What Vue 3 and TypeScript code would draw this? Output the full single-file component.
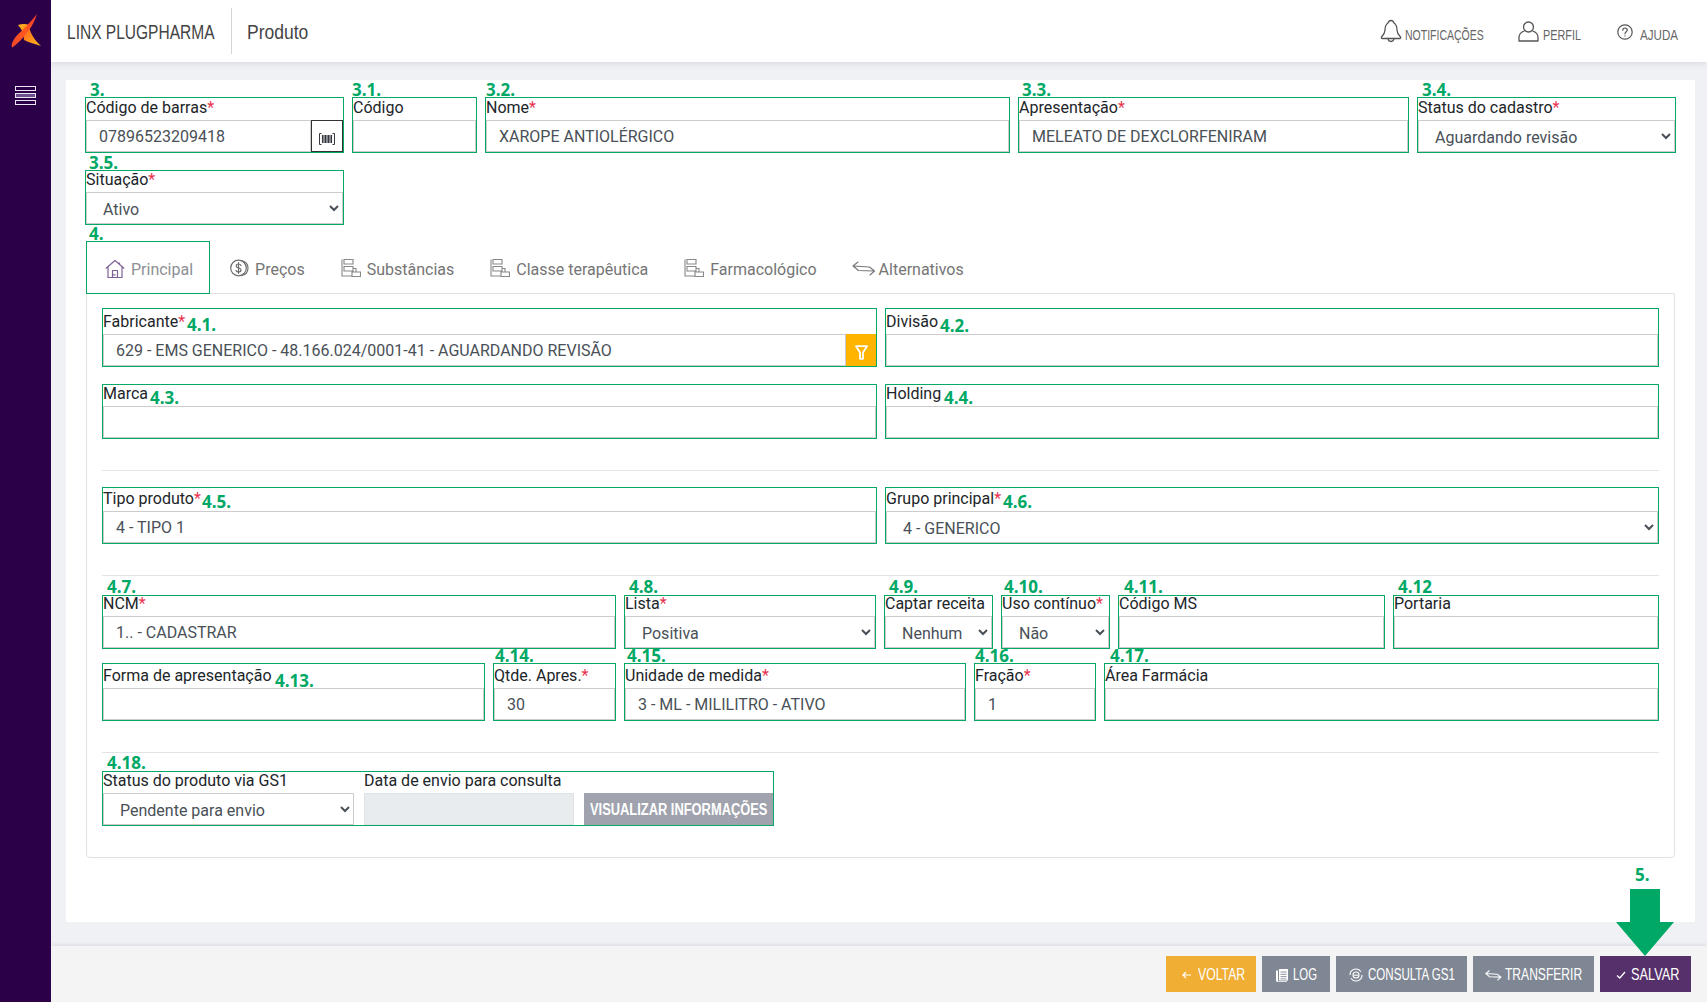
<script setup lang="ts">
interface Tag { text: string; x: number; y: number }
interface Field {
  label: string
  req?: boolean
  kind: 'input' | 'select'
  value?: string
  addon?: 'barcode' | 'filter'
  tag: Tag
}
interface Row { id: string; fields: Field[] }

const t = (text: string, x: number, y: number): Tag => ({ text, x, y })
const tagStyle = (g: Tag) => ({ left: `${g.x}px`, top: `${g.y}px` })

const topRows: Row[] = [
  {
    id: 'a',
    fields: [
      { label: 'Código de barras', req: true, kind: 'input', value: '07896523209418', addon: 'barcode', tag: t('3.', 4, -17) },
      { label: 'Código', kind: 'input', tag: t('3.1.', -1, -17) },
      { label: 'Nome', req: true, kind: 'input', value: 'XAROPE ANTIOLÉRGICO', tag: t('3.2.', 0, -17) },
      { label: 'Apresentação', req: true, kind: 'input', value: 'MELEATO DE DEXCLORFENIRAM', tag: t('3.3.', 3, -17) },
      { label: 'Status do cadastro', req: true, kind: 'select', value: 'Aguardando revisão', tag: t('3.4.', 4, -17) },
    ],
  },
  {
    id: 'b',
    fields: [{ label: 'Situação', req: true, kind: 'select', value: 'Ativo', tag: t('3.5.', 3, -17) }],
  },
]

const panelRows: (Row | 'hr')[] = [
  {
    id: 'fab',
    fields: [
      { label: 'Fabricante', req: true, kind: 'input', value: '629 - EMS GENERICO - 48.166.024/0001-41 - AGUARDANDO REVISÃO', addon: 'filter', tag: t('4.1.', 84, 7) },
      { label: 'Divisão', kind: 'input', tag: t('4.2.', 54, 8) },
    ],
  },
  {
    id: 'marca',
    fields: [
      { label: 'Marca', kind: 'input', tag: t('4.3.', 47, 4) },
      { label: 'Holding', kind: 'input', tag: t('4.4.', 58, 4) },
    ],
  },
  'hr',
  {
    id: 'tipo',
    fields: [
      { label: 'Tipo produto', req: true, kind: 'input', value: '4 - TIPO 1', tag: t('4.5.', 99, 5) },
      { label: 'Grupo principal', req: true, kind: 'select', value: '4 - GENERICO', tag: t('4.6.', 117, 5) },
    ],
  },
  'hr',
  {
    id: 'ncm',
    fields: [
      { label: 'NCM', req: true, kind: 'input', value: '1.. - CADASTRAR', tag: t('4.7.', 4, -18) },
      { label: 'Lista', req: true, kind: 'select', value: 'Positiva', tag: t('4.8.', 4, -18) },
      { label: 'Captar receita', kind: 'select', value: 'Nenhum', tag: t('4.9.', 4, -18) },
      { label: 'Uso contínuo', req: true, kind: 'select', value: 'Não', tag: t('4.10.', 2, -18) },
      { label: 'Código MS', kind: 'input', tag: t('4.11.', 5, -18) },
      { label: 'Portaria', kind: 'input', tag: t('4.12', 4, -18) },
    ],
  },
  {
    id: 'forma',
    fields: [
      { label: 'Forma de apresentação', kind: 'input', tag: t('4.13.', 172, 8) },
      { label: 'Qtde. Apres.', req: true, kind: 'input', value: '30', tag: t('4.14.', 1, -17) },
      { label: 'Unidade de medida', req: true, kind: 'input', value: '3 - ML - MILILITRO - ATIVO', tag: t('4.15.', 2, -17) },
      { label: 'Fração', req: true, kind: 'input', value: '1', tag: t('4.16.', 0, -17) },
      { label: 'Área Farmácia', kind: 'input', tag: t('4.17.', 5, -17) },
    ],
  },
  'hr',
]

const isRow = (r: Row | 'hr'): r is Row => r !== 'hr'

const tabs = [
  { label: 'Principal', icon: 'home' },
  { label: 'Preços', icon: 'coin' },
  { label: 'Substâncias', icon: 'tree' },
  { label: 'Classe terapêutica', icon: 'tree' },
  { label: 'Farmacológico', icon: 'tree' },
  { label: 'Alternativos', icon: 'swap' },
]
</script>

<template>
  <div class="app">
    <aside class="side">
      <svg class="logo" viewBox="0 0 51 62" width="51" height="62" aria-hidden="true">
        <defs>
          <linearGradient id="b1" x1="0" y1="1" x2="1" y2="0">
            <stop offset="0" stop-color="#f2452a" />
            <stop offset="0.55" stop-color="#ff5a1f" />
            <stop offset="1" stop-color="#e8322c" />
          </linearGradient>
          <linearGradient id="b2" x1="0" y1="0" x2="1" y2="1">
            <stop offset="0" stop-color="#ffc01c" />
            <stop offset="0.45" stop-color="#ff7a1c" />
            <stop offset="1" stop-color="#ffc21a" />
          </linearGradient>
        </defs>
        <path d="M18 25C22 23.5 26 23.5 29 25C29 31 34 40 41 46C35 44 29 42.5 24 40C24 34 22 29 18 25Z" fill="url(#b2)" />
        <path d="M37 14C34 25 24 39 12.500 47.500C10 46 13 38 21 31.500C27 26 33 19 37 14Z" fill="url(#b1)" />
      </svg>
      <div class="burger" aria-hidden="true"><i></i><i class="mid"></i><i></i></div>
    </aside>

    <div class="main">
      <header class="head">
        <div class="brand"><span class="sq sq-brand">LINX PLUGPHARMA</span></div>
        <div class="page"><span class="sq sq-page">Produto</span></div>
        <nav class="links">
          <a class="link link-bell">
            <svg width="22" height="24" viewBox="0 0 22 24" fill="none" stroke="#555" stroke-width="1.3" stroke-linejoin="round" stroke-linecap="round">
              <path d="M11 1.500C9.500 1.500 8.500 2.500 8 4C5.500 5.500 5 8 5 11C5 14 3.500 16 1.500 18C1 18.500 1.500 19.500 2.200 19.500H19.800C20.500 19.500 21 18.500 20.500 18C18.500 16 17 14 17 11C17 8 16.500 5.500 14 4C13.500 2.500 12.500 1.500 11 1.500Z" />
              <path d="M8 19.500C8.200 21.500 9.500 22.500 11 22.500C12.500 22.500 13.800 21.500 14 19.500" />
            </svg>
            <span class="sq sq-not">NOTIFICAÇÕES</span>
          </a>
          <a class="link link-user">
            <svg width="21" height="21" viewBox="0 0 21 21" fill="none" stroke="#555" stroke-width="1.3" stroke-linejoin="round">
              <ellipse cx="10.500" cy="6" rx="5" ry="5" />
              <path d="M6.500 10C3 11 1 13 1 16.500V20H20V16.500C20 13 18 11 14.500 10" />
            </svg>
            <span class="sq sq-per">PERFIL</span>
          </a>
          <a class="link link-help">
            <svg class="help-ic" width="16" height="16" viewBox="0 0 16 16" fill="none" stroke="#555" stroke-width="1.2" stroke-linecap="round">
              <circle cx="8" cy="8" r="7.200" />
              <path d="M5.800 6.300C5.800 4.900 6.800 4 8 4C9.300 4 10.300 4.900 10.300 6.100C10.300 7.600 8 7.900 8 9.800" />
              <path d="M8 11.800V12" />
            </svg>
            <span class="sq sq-aju">AJUDA</span>
          </a>
        </nav>
      </header>

      <div class="content">
        <section class="card">
          <div v-for="row in topRows" :key="row.id" class="row" :class="`row-${row.id}`">
            <div v-for="f in row.fields" :key="f.label" class="box">
              <span class="tag" :style="tagStyle(f.tag)">{{ f.tag.text }}</span>
              <label class="lab">{{ f.label }}<em v-if="f.req">*</em></label>
              <div class="ctl">
                <select v-if="f.kind === 'select'" class="inp"><option>{{ f.value }}</option></select>
                <input v-else class="inp" type="text" :value="f.value ?? ''" readonly />
                <button v-if="f.addon === 'barcode'" class="barcode" type="button" aria-label="Código de barras">
                  <svg width="16" height="12" viewBox="0 0 16 12" fill="none" stroke="#343a40">
                    <path d="M2.500 .5H.5V11.500H2.500M13.500 .5H15.500V11.500H13.500" />
                    <path d="M3.500 2V10M5 2V10M6.500 2V10M8 2V10M9.500 2V10M11 2V10M12.500 2V10" stroke-width="1.100" />
                  </svg>
                </button>
              </div>
            </div>
          </div>

          <div class="tabs">
            <span class="tag tag-tab">4.</span>
            <a v-for="(tb, i) in tabs" :key="tb.label" class="tab" :class="{ active: i === 0 }">
              <svg v-if="tb.icon === 'home'" width="20" height="20" viewBox="0 0 20 20" fill="none" stroke="#7e6296" stroke-width="1.200" stroke-linejoin="round">
                <path d="M.8 9.500L10 1.500L19.200 9.500M3 7.800V18.500H17V7.800M14.500 3.500V5.800" />
                <path d="M7.500 18.500V11.500H12.500V18.500M7.500 15.800H10.500" />
              </svg>
              <svg v-else-if="tb.icon === 'coin'" width="19" height="20" viewBox="0 0 19 20" fill="none" stroke="#6f6f6f" stroke-width="1.200" stroke-linecap="round">
                <circle cx="8.500" cy="10" r="7.800" />
                <path d="M11 2.600C15.500 3.500 18 6.500 18 10C18 14 15.500 17 11 17.600" />
                <path d="M11 7.400C10.600 6.500 9.600 6 8.500 6C7.200 6 6.200 6.800 6.200 7.900C6.200 10.400 11 9.400 11 12C11 13.200 10 14 8.500 14C7.300 14 6.300 13.400 6 12.500M8.500 4.500V15.500" />
              </svg>
              <svg v-else-if="tb.icon === 'tree'" width="20" height="20" viewBox="0 0 20 20" fill="none" stroke="#888" stroke-width="1.100">
                <path d="M3 1.500H12V6H3ZM3 8.500H12V13H3ZM11 14H19.500V18.500H11ZM1 1.500V18H11M12 10.500H15V14" />
              </svg>
              <svg v-else width="24" height="16" viewBox="0 0 24 16" fill="none" stroke="#777" stroke-width="1.100" stroke-linejoin="round" stroke-linecap="round">
                <path d="M6 2L1 6L6 10M1 6L17 7M6 10.500L22.500 11M17.500 7L22.500 11L18 15" />
              </svg>
              <span>{{ tb.label }}</span>
            </a>
          </div>

          <div class="panel">
            <template v-for="(row, idx) in panelRows" :key="idx">
              <div v-if="isRow(row)" class="row" :class="`row-${row.id}`">
                <div v-for="f in row.fields" :key="f.label" class="box">
                  <span class="tag" :style="tagStyle(f.tag)">{{ f.tag.text }}</span>
                  <label class="lab">{{ f.label }}<em v-if="f.req">*</em></label>
                  <div class="ctl">
                    <select v-if="f.kind === 'select'" class="inp"><option>{{ f.value }}</option></select>
                    <input v-else class="inp" type="text" :value="f.value ?? ''" readonly />
                    <button v-if="f.addon === 'filter'" class="filter" type="button" aria-label="Filtrar">
                      <svg width="13" height="15" viewBox="0 0 13 15" fill="none" stroke="#fff" stroke-width="1.800" stroke-linejoin="round">
                        <path d="M1 1.200H12L8 7.500V13.800H5V7.500Z" />
                      </svg>
                    </button>
                  </div>
                </div>
              </div>
              <hr v-else class="sep" />
            </template>

            <div class="box gs1">
              <span class="tag gs1-tag">4.18.</span>
              <div class="gs1-col gs1-status">
                <label class="lab">Status do produto via GS1</label>
                <select class="inp"><option>Pendente para envio</option></select>
              </div>
              <div class="gs1-col gs1-date">
                <label class="lab">Data de envio para consulta</label>
                <input class="inp off" type="text" disabled />
              </div>
              <button class="view" type="button"><span class="sq sq-view">VISUALIZAR INFORMAÇÕES</span></button>
            </div>
          </div>
        </section>
      </div>

      <footer class="foot">
        <div class="callout" aria-hidden="true">
          <span class="tag-five">5.</span>
          <svg width="58" height="67" viewBox="0 0 58 67"><path d="M14 0H44V33H58L29 67L0 33H14Z" fill="#00a865" /></svg>
        </div>
        <button class="btn b-back" type="button">
          <svg width="9" height="8" viewBox="0 0 9 8" fill="none" stroke="#fff" stroke-width="1.200"><path d="M9 4H1M4 1L1 4L4 7" /></svg>
          <span class="sq sq-volt">VOLTAR</span>
        </button>
        <button class="btn b-gray b-log" type="button">
          <svg width="14" height="14" viewBox="0 0 14 14" fill="#fff"><path d="M1 2.500H3V13H12V13.800H2.500C1.500 13.800 1 13.200 1 12.500ZM4 1H13V12.500H4Z" /><path d="M5.500 4H11.500M5.500 6.300H11.500M5.500 8.600H11.500M5.500 10.900H11.500" stroke="#7f8794" stroke-width=".9" /></svg>
          <span class="sq sq-log">LOG</span>
        </button>
        <button class="btn b-gray b-gs1" type="button">
          <svg width="14" height="14" viewBox="0 0 14 14" fill="none" stroke="#fff" stroke-width="1.100">
            <path d="M1 7A6 6 0 0 1 12 3.700M13 7A6 6 0 0 1 2 10.300" />
            <circle cx="7" cy="7" r="3" />
            <path d="M4.800 7.200H9.200" />
          </svg>
          <span class="sq sq-gs1">CONSULTA GS1</span>
        </button>
        <button class="btn b-gray b-tr" type="button">
          <svg width="17" height="12" viewBox="0 0 24 16" fill="none" stroke="#fff" stroke-width="1.500" stroke-linejoin="round" stroke-linecap="round">
            <path d="M6 2L1 6L6 10M1 6L17 7M6 10.500L22.500 11M17.500 7L22.500 11L18 15" />
          </svg>
          <span class="sq sq-tr">TRANSFERIR</span>
        </button>
        <button class="btn b-save" type="button">
          <svg width="10" height="8" viewBox="0 0 10 8" fill="none" stroke="#fff" stroke-width="1.300"><path d="M1 4.500L3.800 7L9 1" /></svg>
          <span class="sq sq-salv">SALVAR</span>
        </button>
      </footer>
    </div>
  </div>
</template>

<style>
html, body { margin: 0; height: 100%; overflow: hidden; }
</style>

<style scoped>
.app {
  display: flex;
  height: 1002px;
  font-family: Roboto, "Liberation Sans", sans-serif;
  font-size: 16px;
  color: #212529;
  background: #f0f1f5;
}
.side {
  width: 51px;
  flex: none;
  background: #2c0049;
  display: flex;
  flex-direction: column;
  align-items: center;
}
.logo { display: block; }
.burger { margin-top: 24px; width: 21px; display: flex; flex-direction: column; gap: 2px; }
.burger i { display: block; height: 5px; box-sizing: border-box; border: 1.500px solid #ece6f2; background: #2c0049; }
.burger i.mid { background: #6c4f8e; }

.main { flex: 1; min-width: 0; display: flex; flex-direction: column; }
.head {
  height: 62px;
  flex: none;
  background: #fff;
  box-shadow: 0 1px 6px rgba(60, 60, 80, 0.14);
  display: flex;
  align-items: center;
  padding: 0 29px 0 16px;
  position: relative;
  z-index: 1;
}
.sq {
  display: inline-block;
  font-family: "Liberation Sans", sans-serif;
  transform-origin: 0 50%;
  white-space: nowrap;
  text-align: left;
}
.sq-brand { width: 147px; transform: scaleX(0.776); }
.sq-page { width: 60px; transform: scaleX(0.875); }
.sq-not { width: 79px; transform: scaleX(0.75); }
.sq-per { width: 38px; transform: scaleX(0.775); }
.sq-aju { width: 38px; transform: scaleX(0.83); }
.sq-view { width: 178px; transform: scaleX(0.805); }
.sq-volt { width: 47px; transform: scaleX(0.72); }
.sq-log { width: 24px; transform: scaleX(0.67); }
.sq-gs1 { width: 87px; transform: scaleX(0.68); }
.sq-tr { width: 77px; transform: scaleX(0.71); }
.sq-salv { width: 48px; transform: scaleX(0.75); }

.brand { font-size: 20px; color: #444; width: 164px; white-space: nowrap; padding-top: 2px; }
.page {
  font-size: 20px;
  color: #444;
  height: 46px;
  line-height: 48px;
  border-left: 1px solid #d5d5d5;
  padding-left: 15px;
}
.links { margin-left: auto; display: flex; align-items: center; }
.link { display: flex; align-items: center; }
.link span { font-size: 14px; color: #666; margin-top: 8px; }
.link-bell { gap: 3px; }
.link-user { gap: 4px; margin-left: 34px; }
.link-help { gap: 7px; margin-left: 36px; }
.help-ic { margin-top: 2px; }

.content { flex: 1; min-height: 0; display: flex; padding: 18px 12px 24px 15px; }
.card {
  flex: 1;
  min-width: 0;
  background: #fff;
  padding: 17px 19px 0;
}

.row { display: grid; column-gap: 8px; }
.row-a { grid-template-columns: 259px 125px 525px 391px 259px; }
.row-b { grid-template-columns: 259px; margin-top: 17px; }
.row-fab, .row-marca, .row-tipo { grid-template-columns: 775px 774px; }
.row-marca { margin-top: 17px; }
.row-ncm { grid-template-columns: 514px 252px 109px 109px 267px 266px; }
.row-forma { grid-template-columns: 383px 123px 342px 122px 555px; margin-top: 14px; }

.box {
  position: relative;
  border: 1px solid #06a865;
  display: flex;
  flex-direction: column;
  min-width: 0;
}
.tag {
  position: absolute;
  font-family: "Open Sans", "Liberation Sans", sans-serif;
  font-weight: 700;
  font-size: 17px;
  line-height: 17px;
  color: #00a865;
  white-space: nowrap;
  z-index: 2;
  pointer-events: none;
}
.lab { display: block; height: 22px; line-height: 19px; white-space: nowrap; }
.lab em { font-style: normal; color: #e8334f; }
.row-b .lab { height: 21px; line-height: 17px; }
.row-fab .lab { height: 25px; line-height: 26px; }
.row-marca .lab { height: 21px; line-height: 17px; }
.row-tipo .lab { height: 23px; line-height: 22px; }
.row-ncm .lab { height: 20px; line-height: 15px; }
.row-forma .lab { height: 24px; line-height: 23px; }

.ctl { display: flex; height: 32px; }
.inp {
  flex: 1;
  min-width: 0;
  width: 100%;
  height: 32px;
  box-sizing: border-box;
  border: 1px solid #ccc;
  border-radius: 0;
  background: #fff;
  padding: 0 12px;
  font: 16px Roboto, "Liberation Sans", sans-serif;
  color: #495057;
  outline: none;
}
select.inp { padding-top: 2px; }
.barcode {
  flex: none;
  width: 32px;
  height: 32px;
  padding: 6px 0 0;
  box-sizing: border-box;
  border: 1px solid #333;
  background: #fff;
  display: flex;
  align-items: center;
  justify-content: center;
}
.filter {
  flex: none;
  width: 30px;
  height: 32px;
  padding: 4px 0 0;
  border: 0;
  background: #ffb400;
  display: flex;
  align-items: center;
  justify-content: center;
}

.tabs {
  position: relative;
  margin-top: 16px;
  margin-left: 1px;
  height: 52px;
  display: flex;
  align-items: stretch;
}
.tag-tab { left: 3px; top: -16px; }
.tab {
  display: flex;
  align-items: center;
  gap: 6px;
  padding: 4px 18px 0;
  color: #757575;
  white-space: nowrap;
}
.tab svg { margin-top: -2px; }
.tab.active {
  border: 1px solid #06a865;
  color: #8d8f96;
  margin-right: 2px;
  margin-bottom: -1px;
  padding: 4px 16px 0 18px;
  box-sizing: border-box;
}
.tab:last-child { gap: 3px; margin-left: -1px; }

.panel {
  margin-left: 1px;
  width: 1589px;
  box-sizing: border-box;
  border: 1px solid #e2e2e2;
  border-radius: 0 0 4px 4px;
  padding: 14px 15px 31px;
}
.sep { border: 0; height: 1px; background: #e4e4e4; margin: 31px 0 16px; }
.sep:has(+ .row-ncm) { margin-bottom: 19px; }
.sep:has(+ .gs1) { margin-bottom: 18px; }

.gs1 {
  flex-direction: row;
  width: 672px;
  box-sizing: border-box;
  align-items: flex-end;
}
.gs1-tag { left: 4px; top: -18px; }
.gs1-col { display: flex; flex-direction: column; }
.gs1-col .lab { height: 21px; line-height: 18px; }
.gs1-col .inp { flex: none; }
.gs1-status { width: 251px; }
.gs1-date { width: 210px; margin-left: 10px; }
.off { background: #e9ecef; border-color: #dfe2e6; }
.view {
  margin-left: 10px;
  width: 189px;
  height: 32px;
  padding: 2px 0 0;
  border: 0;
  background: #a0a3ae;
  color: #fff;
  font-weight: 700;
  font-size: 16px;
  white-space: nowrap;
}

.foot {
  position: relative;
  z-index: 1;
  height: 56px;
  flex: none;
  box-sizing: border-box;
  background: #f4f4f4;
  box-shadow: 0 -1px 4px rgba(60, 60, 80, 0.12);
  display: flex;
  justify-content: flex-end;
  gap: 6px;
  padding: 10px 16px 10px 0;
}
.callout {
  position: absolute;
  right: 33px;
  top: -80px;
  width: 58px;
  height: 90px;
  display: flex;
  flex-direction: column;
  align-items: center;
  justify-content: flex-end;
}
.tag-five {
  position: absolute;
  top: 0;
  left: 19px;
  font-family: "Open Sans", sans-serif;
  font-weight: 700;
  font-size: 17px;
  line-height: 17px;
  color: #00a865;
}
.btn {
  height: 36px;
  padding: 2px 0 0;
  box-sizing: border-box;
  border: 0;
  color: #fff;
  font-size: 17px;
  display: flex;
  align-items: center;
  justify-content: center;
  gap: 4px;
  white-space: nowrap;
}
.b-back { width: 90px; background: #f0ae35; gap: 7px; padding-left: 4px; }
.b-gray { background: #7f8794; }
.b-log { width: 68px; }
.b-gs1 { width: 131px; gap: 5px; }
.b-tr { width: 121px; gap: 3px; }
.b-save { width: 91px; background: #55306a; gap: 5px; padding-left: 3px; }
</style>
